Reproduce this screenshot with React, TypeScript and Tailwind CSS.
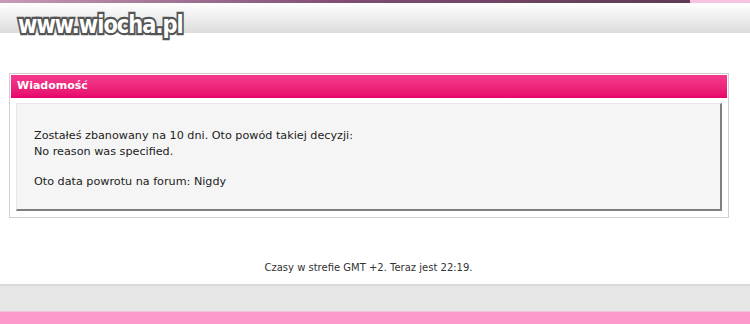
import React from "react";

export default function App() {
  return (
    <div className="w-[750px] h-[324px] bg-white flex flex-col overflow-hidden" style={{ fontFamily: '"DejaVu Sans", Verdana, sans-serif' }}>
      <div className="flex h-[3px]">
        <div className="w-[690px] bg-gradient-to-r from-[#c79ab8] via-[#7e4d70] to-[#5e3a55]" />
        <div className="flex-1 bg-[#f7c3df]" />
      </div>
      <header className="h-[30px] bg-gradient-to-b from-white to-[#dcdcdc] relative">
        <span
          className="absolute left-[18px] top-[9px] text-[21px] font-bold text-white leading-none tracking-[-1px] origin-top scale-y-[1.22]"
          style={{ WebkitTextStroke: "3.5px #555", paintOrder: "stroke fill" }}
        >
          www.wiocha.pl
        </span>
      </header>

      <main className="mt-[40px] mx-[9px] w-[720px] border border-[#cfcfcf] p-px">
        <div className="h-[23px] bg-gradient-to-b from-[#f43a8d] to-[#e6006b] flex items-center px-[6px] text-[11px] font-bold text-white">
          Wiadomość
        </div>
        <div className="mx-[5px] mt-[5px] mb-[5px] h-[108px] bg-[#f5f5f5] border border-[#e6e6e6] border-r-2 border-b-2 border-r-[#808080] border-b-[#808080] px-[17px] pt-[24px] text-[11.2px] leading-[16px] text-[#222]">
          <p>Zostałeś zbanowany na 10 dni. Oto powód takiej decyzji:</p>
          <p>No reason was specified.</p>
          <p className="mt-[14px]">Oto data powrotu na forum: Nigdy</p>
        </div>
      </main>

      <p className="mt-[42px] text-center pr-[13px] text-[10px] text-[#333]">
        Czasy w strefie GMT +2. Teraz jest 22:19.
      </p>

      <div className="mt-auto h-[27px] bg-[#e6e6e6] border-t-2 border-[#dadada]" />
      <div className="h-[13px] bg-[#fe99cb] border-t border-[#f4c0da]" />
    </div>
  );
}
